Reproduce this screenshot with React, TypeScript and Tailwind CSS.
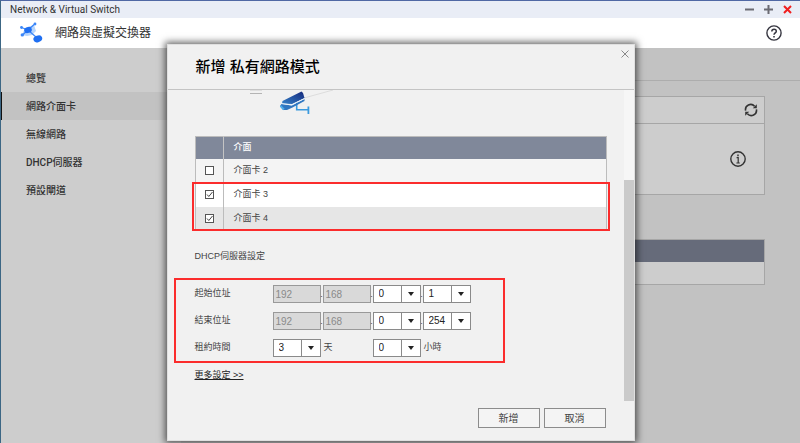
import { useState } from "react";
import type { ReactNode } from "react";

const menuItems = ["總覽", "網路介面卡", "無線網路", "DHCP伺服器", "預設閘道"];

const adapters = [
  { id: 2, name: "介面卡 2", rowClass: "bg-[#f4f4f4]" },
  { id: 3, name: "介面卡 3", rowClass: "bg-white" },
  { id: 4, name: "介面卡 4", rowClass: "bg-[#e6e6e6]" },
];

function Logo() {
  return (
    <svg viewBox="0 0 24 22" className="h-[22px] w-6" aria-hidden="true">
      <path d="M3 13 L6 6 L15 3 L17 9 L13 13 L8 14 Z" fill="#b5d4fc" />
      <path d="M2.5 5.5 L9 8 L19 16.7 M3.5 13 L9 8 L15.7 2" stroke="#3b86f8" strokeWidth="1.3" fill="none" />
      <circle cx="2.5" cy="5.5" r="1.4" fill="#3b86f8" />
      <circle cx="3.3" cy="12.9" r="1.7" fill="#3b86f8" />
      <circle cx="16" cy="2" r="1.4" fill="#3b86f8" />
      <ellipse cx="9" cy="8" rx="3.9" ry="3" fill="#1f6ff2" transform="rotate(-20 9 8)" />
      <ellipse cx="18.8" cy="16.8" rx="4.5" ry="3.3" fill="#1f6ff2" transform="rotate(-20 18.8 16.8)" />
    </svg>
  );
}

function HelpIcon() {
  return (
    <svg viewBox="0 0 16 16" className="size-4" fill="none" stroke="#35353f" aria-hidden="true">
      <circle cx="8" cy="8" r="7.1" strokeWidth="1.4" />
      <path d="M5.8 6.4 C5.8 3.4 10.3 3.5 10.3 6.2 C10.3 7.8 8 8 8 9.8" strokeWidth="1.5" />
      <path d="M8 10.9 V12.5" strokeWidth="1.6" />
    </svg>
  );
}

function RefreshIcon() {
  return (
    <svg viewBox="0 0 14 14" className="size-3.5" fill="none" stroke="#333" strokeWidth="1.6" aria-hidden="true">
      <path d="M1.6 7.6 A5.2 5.2 0 0 1 10.6 3.2" />
      <path d="M12.4 6.4 A5.2 5.2 0 0 1 3.4 10.8" />
      <path d="M12.8 1.2 V5.2 H8.8 Z M1.2 12.8 V8.8 H5.2 Z" fill="#333" stroke="none" />
    </svg>
  );
}

function InfoIcon() {
  return (
    <svg viewBox="0 0 16 16" className="size-4" fill="none" stroke="#333" aria-hidden="true">
      <circle cx="8" cy="8" r="7.2" strokeWidth="1.4" />
      <path d="M6.6 6.7 H8.2 V12 M6.4 12 H9.8" strokeWidth="1.2" />
      <path d="M8 3.6 V5.2" strokeWidth="1.5" />
    </svg>
  );
}

function CameraDiagram() {
  return (
    <svg viewBox="0 0 412 46" className="h-[46px] w-full" preserveAspectRatio="xMinYMin meet" aria-hidden="true">
      <defs>
        <linearGradient id="camera" x1="1" y1="0" x2="0" y2="1">
          <stop offset="0" stopColor="#15287c" />
          <stop offset="1" stopColor="#3480c8" />
        </linearGradient>
      </defs>
      <path d="M55 0.5 H67" stroke="#dedede" />
      <path d="M55 3.5 H67" stroke="#b4b4b4" />
      <path d="M109 8 L138 0" stroke="#dcdcdc" />
      <path d="M101.7 12 V19.7 H113" stroke="#3b9ade" strokeWidth="1.6" fill="none" />
      <path d="M113.4 16.5 V24" stroke="#3b9ade" strokeWidth="1.8" />
      <path d="M87.5 11 L106.5 1.5 L108 3 L109.5 8 L97 14 L87 13.5 Z" fill="url(#camera)" />
      <path d="M86.5 14 L97 15.5 L109.5 9 L109.5 11 L97.5 17.5 L92 20 L88 20 L85 16 Z" fill="#3076c0" />
      <path d="M86.5 13.5 L96.5 15 L109.5 8.5" stroke="#eaf3fb" strokeWidth="0.9" fill="none" />
      <path d="M85.5 16 L89 19.5" stroke="#4cabe8" strokeWidth="1.8" />
    </svg>
  );
}

function ComboBox({ label, value, options }: { label: string; value: string; options: string[] }) {
  return (
    <span className="relative block h-[18px] w-12">
      <select
        aria-label={label}
        defaultValue={value}
        className="block h-full w-full appearance-none border border-[#8a8a8a] bg-white pl-[5px] text-[10px] leading-4 text-[#222]"
      >
        {options.map((option) => (
          <option key={option}>{option}</option>
        ))}
      </select>
      <span className="pointer-events-none absolute inset-y-0 right-0 flex w-5 items-center justify-center border-l border-[#8a8a8a]">
        <svg viewBox="0 0 6 4" className="h-1 w-1.5" aria-hidden="true">
          <path d="M0 0 H6 L3 4 Z" fill="#222" />
        </svg>
      </span>
    </span>
  );
}

function LockedOctet({ label, value }: { label: string; value: string }) {
  return (
    <input
      aria-label={label}
      value={value}
      disabled
      className="block h-[18px] w-12 border border-[#999] bg-[#d9d9d9] px-0.5 text-[10px] leading-4 text-[#8a8a8a]"
    />
  );
}

function Dot() {
  return <span className="flex w-0.5 justify-center overflow-visible leading-[18px]">.</span>;
}

function FormRow({ label, children }: { label: string; children: ReactNode }) {
  return (
    <div className="flex h-[18px] items-center">
      <span className="w-[78px] shrink-0">{label}</span>
      {children}
    </div>
  );
}

function AddNetworkDialog() {
  const [selected, setSelected] = useState([3, 4]);

  const toggle = (id: number) => {
    setSelected((prev) => (prev.includes(id) ? prev.filter((item) => item !== id) : [...prev, id]));
  };

  return (
    <section
      role="dialog"
      aria-labelledby="dialog-title"
      className="absolute inset-x-0 top-[43px] mx-auto w-[468px] border border-[#e0e0e0] bg-[#f1f1f1] font-['Liberation_Sans','Noto_Sans_CJK_TC',sans-serif] text-[9px] text-[#444] shadow-[0_0_7px_2px_rgba(0,0,0,0.6)]"
    >
      <header className="flex h-[45px] items-start border-b border-[#c4c4c4] pl-7">
        <h2 id="dialog-title" className="flex-1 self-center text-[15px] font-medium text-black">
          新增 私有網路模式
        </h2>
        <button aria-label="關閉" className="p-[5px]">
          <svg viewBox="0 0 8 8" className="size-2" stroke="#888" aria-hidden="true">
            <path d="M0.5 0.5 L7.5 7.5 M7.5 0.5 L0.5 7.5" />
          </svg>
        </button>
      </header>

      <div className="flex h-[311px]">
        <div className="flex-1 overflow-hidden pr-[17px] pl-[27px]">
          <CameraDiagram />
          <div className="relative">
            <table className="w-full table-fixed border-collapse border border-[#bcbcbc] text-left">
              <thead>
                <tr className="h-[22px] bg-[#80889a] text-white">
                  <th className="w-7 border-r border-[#c4c4c4]" aria-label="選取" />
                  <th className="pl-2.5 font-medium">介面</th>
                </tr>
              </thead>
              <tbody>
                {adapters.map((adapter) => (
                  <tr key={adapter.id} className={`h-6 ${adapter.rowClass}`}>
                    <td className="border-r border-[#bcbcbc]">
                      <span className="relative mx-auto flex size-[9px]">
                        <input
                          id={`adapter-${adapter.id}`}
                          type="checkbox"
                          checked={selected.includes(adapter.id)}
                          onChange={() => toggle(adapter.id)}
                          className="peer size-[9px] appearance-none border border-[#555] bg-white"
                        />
                        <svg
                          viewBox="0 0 9 9"
                          className="pointer-events-none invisible absolute inset-0 size-[9px] peer-checked:visible"
                          aria-hidden="true"
                        >
                          <path d="M2 4.5 L3.8 6.5 L7.5 2" fill="none" stroke="#444" />
                        </svg>
                      </span>
                    </td>
                    <td className="pl-2.5">
                      <label htmlFor={`adapter-${adapter.id}`}>{adapter.name}</label>
                    </td>
                  </tr>
                ))}
              </tbody>
            </table>
            <div className="pointer-events-none absolute top-[46px] -right-[3px] bottom-0 -left-[3px] border-2 border-[#fb2c2c]" />
          </div>

          <h3 className="mt-[17px] leading-4">DHCP伺服器設定</h3>

          <div className="mt-3.5 -ml-[21px] flex w-[331px] flex-col gap-[9px] border-2 border-[#fb2c2c] pt-[5px] pb-1 pl-[19px]">
            <FormRow label="起始位址">
              <LockedOctet label="起始位址 1" value="192" />
              <Dot />
              <LockedOctet label="起始位址 2" value="168" />
              <Dot />
              <ComboBox label="起始位址 3" value="0" options={["0", "1", "2"]} />
              <Dot />
              <ComboBox label="起始位址 4" value="1" options={["1", "2", "3"]} />
            </FormRow>
            <FormRow label="結束位址">
              <LockedOctet label="結束位址 1" value="192" />
              <Dot />
              <LockedOctet label="結束位址 2" value="168" />
              <Dot />
              <ComboBox label="結束位址 3" value="0" options={["0", "1", "2"]} />
              <Dot />
              <ComboBox label="結束位址 4" value="254" options={["252", "253", "254"]} />
            </FormRow>
            <FormRow label="租約時間">
              <ComboBox label="租約時間 天" value="3" options={["1", "2", "3"]} />
              <span className="w-[52px] pl-[3px]">天</span>
              <ComboBox label="租約時間 小時" value="0" options={["0", "1", "2"]} />
              <span className="pl-[3px]">小時</span>
            </FormRow>
          </div>

          <a href="#more" className="mt-1.5 inline-block leading-3 text-[#222] underline">
            更多設定 &gt;&gt;
          </a>
        </div>
        <div className="flex w-2.5 flex-col bg-[#f6f6f6] pt-[90px]">
          <div className="flex-1 bg-[#cacaca]" />
        </div>
      </div>

      <footer className="flex h-[39px] justify-end gap-1 pt-[7px] pr-7 text-[10px]">
        <button className="h-5 w-[62px] border border-[#8c8c8c] bg-[#f4f4f4]">新增</button>
        <button className="h-5 w-[62px] border border-[#8c8c8c] bg-[#f4f4f4]">取消</button>
      </footer>
    </section>
  );
}

export default function App() {
  return (
    <div className="relative flex min-h-screen flex-col overflow-hidden border-t border-l border-t-[#5068a4] border-l-[#3c6684] bg-[#c2c2c2] font-[Roboto,'Noto_Sans_CJK_TC',sans-serif] text-[#333]">
      <div className="flex h-[17px] items-center bg-[#e9edf6] pr-2 pl-[9px] text-[10px]">
        <h1 className="flex-1">Network &amp; Virtual Switch</h1>
        <div className="flex items-center gap-2.5">
          <button aria-label="最小化">
            <svg viewBox="0 0 9 9" className="size-[9px]" stroke="#6b6b73" strokeWidth="2" aria-hidden="true">
              <path d="M0 4.5 H9" />
            </svg>
          </button>
          <button aria-label="最大化">
            <svg viewBox="0 0 9 9" className="size-[9px]" stroke="#6b6b73" strokeWidth="2" aria-hidden="true">
              <path d="M0 4.5 H9 M4.5 0 V9" />
            </svg>
          </button>
          <button aria-label="關閉視窗">
            <svg viewBox="0 0 9 9" className="size-[9px]" stroke="#f01f1f" strokeWidth="2" aria-hidden="true">
              <path d="M1 1 L8 8 M8 1 L1 8" />
            </svg>
          </button>
        </div>
      </div>

      <header className="flex h-[30px] items-center bg-white pr-[18px] pl-[18px]">
        <Logo />
        <span className="flex-1 pl-3 text-[12px]">網路與虛擬交換器</span>
        <button aria-label="說明">
          <HelpIcon />
        </button>
      </header>

      <div className="flex flex-1">
        <nav className="w-[180px] shrink-0 bg-[#cdcdcd] pt-4 text-[10px] font-medium">
          {menuItems.map((item) => (
            <a
              key={item}
              href="#"
              className={`flex h-7 items-center border-l pl-6 ${
                item === "網路介面卡" ? "border-[#111] bg-[#c2c2c2]" : "border-transparent"
              }`}
            >
              {item}
            </a>
          ))}
        </nav>

        <main className="flex-1">
          <div className="h-[33px] border-b border-[#adadad]" />
          <div className="mt-[15px] mr-[35px] ml-4 border border-[#a6a6a6] bg-[#cdcdcd]">
            <div className="flex h-[27px] items-center justify-end border-b border-[#a6a6a6] pr-1.5">
              <button aria-label="重新整理">
                <RefreshIcon />
              </button>
            </div>
            <div className="flex h-[70px] items-center justify-end pr-[18px]">
              <button aria-label="資訊">
                <InfoIcon />
              </button>
            </div>
          </div>
          <div className="mt-[44px] mr-[35px] ml-4 border border-[#a6a6a6] bg-[#cdcdcd]">
            <div className="h-[22px] bg-[#666b7a]" />
            <div className="h-[22px]" />
          </div>
        </main>
      </div>

      <AddNetworkDialog />
    </div>
  );
}
